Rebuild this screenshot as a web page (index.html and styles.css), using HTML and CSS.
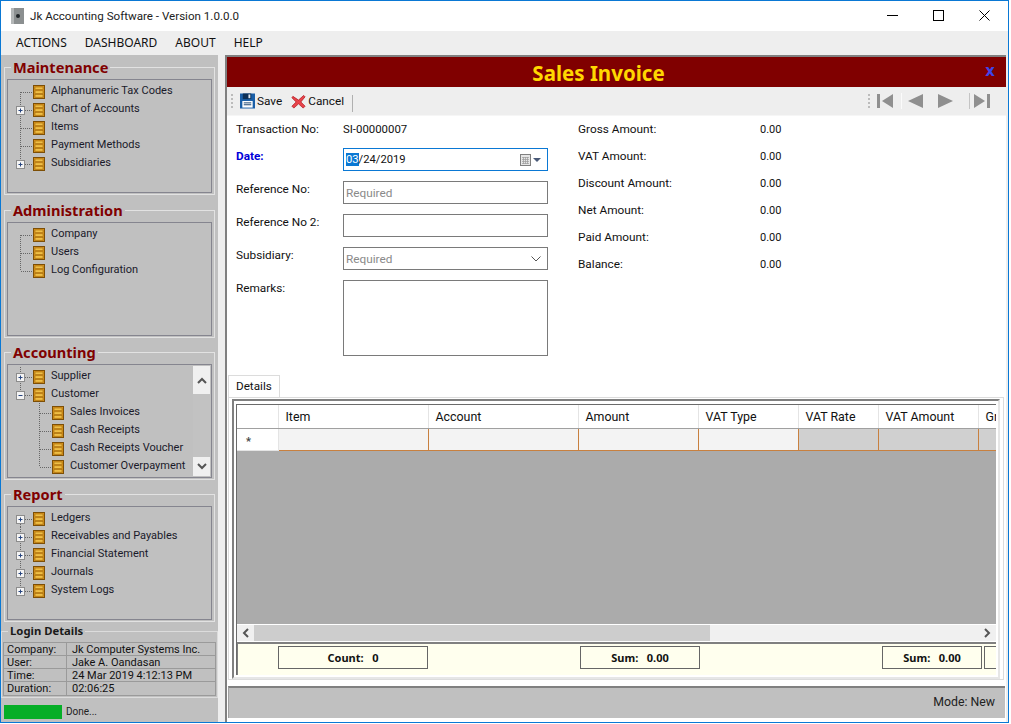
FILE: index.html
```html
<!DOCTYPE html>
<html lang="en">
<head>
<meta charset="utf-8">
<title>Jk Accounting Software</title>
<link rel="stylesheet" href="styles.css">
</head>
<body>
<svg class="defs" width="0" height="0" aria-hidden="true">
  <symbol id="cab" viewBox="0 0 12 14">
    <rect x="0.5" y="0.5" width="11" height="13" fill="#d8931a" stroke="#7d4f06"/>
    <rect x="2" y="2" width="8" height="2.6" fill="#f0bf45" stroke="#a26a0e" stroke-width=".6"/>
    <rect x="2" y="5.8" width="8" height="2.6" fill="#f0bf45" stroke="#a26a0e" stroke-width=".6"/>
    <rect x="2" y="9.6" width="8" height="2.6" fill="#f0bf45" stroke="#a26a0e" stroke-width=".6"/>
  </symbol>
  <g id="plus"><rect x="8.5" y="6.5" width="8" height="8" fill="#f4f4f4" stroke="#8c8c8c"/><path d="M10.5 10.5h4M12.5 8.5v4" stroke="#27457f"/></g>
  <g id="minus"><rect x="8.5" y="6.5" width="8" height="8" fill="#f4f4f4" stroke="#8c8c8c"/><path d="M10.5 10.5h4" stroke="#27457f"/></g>
</svg>
<div class="window">
  <header class="titlebar">
    <svg class="appicon" width="13" height="16" viewBox="0 0 13 16"><rect width="13" height="16" fill="#8b8f90"/><rect x="0" y="0" width="3" height="16" fill="#b4b7b8"/><circle cx="7" cy="8" r="2" fill="#1e2326"/></svg>
    <span class="apptitle">Jk Accounting Software - Version 1.0.0.0</span>
    <div class="winbtns">
      <svg width="11" height="11" viewBox="0 0 11 11"><path d="M0 5.5h11" stroke="#000"/></svg>
      <svg width="11" height="11" viewBox="0 0 11 11"><rect x=".5" y=".5" width="10" height="10" fill="none" stroke="#000"/></svg>
      <svg width="11" height="11" viewBox="0 0 11 11"><path d="M.5.5l10 10M10.5.5l-10 10" stroke="#000"/></svg>
    </div>
  </header>
  <nav class="menubar"><span>ACTIONS</span><span>DASHBOARD</span><span>ABOUT</span><span>HELP</span></nav>
  <div class="main">
    <aside class="sidebar">
      <fieldset class="group first"><legend>Maintenance</legend>
        <div class="panel"><div class="tree">
          <div class="row"><svg class="conn" width="25" height="18"><path d="M12.5 10v8M13 10.5h12" class="dot"/></svg><svg class="cab"><use href="#cab"/></svg><span>Alphanumeric Tax Codes</span></div>
          <div class="row"><svg class="conn" width="25" height="18"><path d="M12.5 0v18M17 10.5h8" class="dot"/><use href="#plus"/></svg><svg class="cab"><use href="#cab"/></svg><span>Chart of Accounts</span></div>
          <div class="row"><svg class="conn" width="25" height="18"><path d="M12.5 0v18M13 10.5h12" class="dot"/></svg><svg class="cab"><use href="#cab"/></svg><span>Items</span></div>
          <div class="row"><svg class="conn" width="25" height="18"><path d="M12.5 0v18M13 10.5h12" class="dot"/></svg><svg class="cab"><use href="#cab"/></svg><span>Payment Methods</span></div>
          <div class="row"><svg class="conn" width="25" height="18"><path d="M12.5 0v7M17 10.5h8" class="dot"/><use href="#plus"/></svg><svg class="cab"><use href="#cab"/></svg><span>Subsidiaries</span></div>
        </div></div>
      </fieldset>
      <fieldset class="group"><legend>Administration</legend>
        <div class="panel"><div class="tree">
          <div class="row"><svg class="conn" width="25" height="18"><path d="M12.5 10v8M13 10.5h12" class="dot"/></svg><svg class="cab"><use href="#cab"/></svg><span>Company</span></div>
          <div class="row"><svg class="conn" width="25" height="18"><path d="M12.5 0v18M13 10.5h12" class="dot"/></svg><svg class="cab"><use href="#cab"/></svg><span>Users</span></div>
          <div class="row"><svg class="conn" width="25" height="18"><path d="M12.5 0v10M13 10.5h12" class="dot"/></svg><svg class="cab"><use href="#cab"/></svg><span>Log Configuration</span></div>
        </div></div>
      </fieldset>
      <fieldset class="group"><legend>Accounting</legend>
        <div class="panel split"><div class="tree">
          <div class="row"><svg class="conn" width="25" height="18"><path d="M12.5 0v18M17 10.5h8" class="dot"/><use href="#plus"/></svg><svg class="cab"><use href="#cab"/></svg><span>Supplier</span></div>
          <div class="row"><svg class="conn" width="25" height="18"><path d="M12.5 0v7M17 10.5h8" class="dot"/><use href="#minus"/></svg><svg class="cab"><use href="#cab"/></svg><span>Customer</span></div>
          <div class="row"><svg class="conn" width="44" height="18"><path d="M31.5 0v18M32 10.5h12" class="dot"/></svg><svg class="cab"><use href="#cab"/></svg><span>Sales Invoices</span></div>
          <div class="row"><svg class="conn" width="44" height="18"><path d="M31.5 0v18M32 10.5h12" class="dot"/></svg><svg class="cab"><use href="#cab"/></svg><span>Cash Receipts</span></div>
          <div class="row"><svg class="conn" width="44" height="18"><path d="M31.5 0v18M32 10.5h12" class="dot"/></svg><svg class="cab"><use href="#cab"/></svg><span>Cash Receipts Voucher</span></div>
          <div class="row"><svg class="conn" width="44" height="18"><path d="M31.5 0v10M32 10.5h12" class="dot"/></svg><svg class="cab"><use href="#cab"/></svg><span>Customer Overpayment</span></div>
        </div>
        <div class="vscroll">
          <div class="vbtn"><svg width="10" height="7" viewBox="0 0 10 7"><path d="M1 6l4-4 4 4" fill="none" stroke="#555" stroke-width="2"/></svg></div>
          <div class="vthumb"></div>
          <div class="vbtn"><svg width="10" height="7" viewBox="0 0 10 7"><path d="M1 1l4 4 4-4" fill="none" stroke="#555" stroke-width="2"/></svg></div>
        </div></div>
      </fieldset>
      <fieldset class="group last"><legend>Report</legend>
        <div class="panel"><div class="tree">
          <div class="row"><svg class="conn" width="25" height="18"><path d="M12.5 7v11M17 10.5h8" class="dot"/><use href="#plus"/></svg><svg class="cab"><use href="#cab"/></svg><span>Ledgers</span></div>
          <div class="row"><svg class="conn" width="25" height="18"><path d="M12.5 0v18M17 10.5h8" class="dot"/><use href="#plus"/></svg><svg class="cab"><use href="#cab"/></svg><span>Receivables and Payables</span></div>
          <div class="row"><svg class="conn" width="25" height="18"><path d="M12.5 0v18M17 10.5h8" class="dot"/><use href="#plus"/></svg><svg class="cab"><use href="#cab"/></svg><span>Financial Statement</span></div>
          <div class="row"><svg class="conn" width="25" height="18"><path d="M12.5 0v18M17 10.5h8" class="dot"/><use href="#plus"/></svg><svg class="cab"><use href="#cab"/></svg><span>Journals</span></div>
          <div class="row"><svg class="conn" width="25" height="18"><path d="M12.5 0v7M17 10.5h8" class="dot"/><use href="#plus"/></svg><svg class="cab"><use href="#cab"/></svg><span>System Logs</span></div>
        </div></div>
      </fieldset>
      <fieldset class="login"><legend>Login Details</legend>
        <div class="ltable">
          <span>Company:</span><span>Jk Computer Systems Inc.</span>
          <span>User:</span><span>Jake A. Oandasan</span>
          <span>Time:</span><span>24 Mar 2019 4:12:13 PM</span>
          <span>Duration:</span><span>02:06:25</span>
        </div>
      </fieldset>
      <div class="progress"><div class="bar"></div><span>Done...</span></div>
    </aside>
    <section class="content">
      <div class="formhead"><h1>Sales Invoice</h1><span class="close">x</span></div>
      <div class="toolbar">
        <span class="grip"></span>
        <svg class="tico" width="15" height="16" viewBox="0 0 16 16"><rect width="16" height="16" fill="#1a5fa8"/><rect x="3" y="0" width="9" height="6" fill="#0c2f57"/><rect x="9" y="1" width="2" height="4" fill="#dfe7f0"/><rect x="2.5" y="8" width="11" height="7" fill="#fff"/><path d="M4 10h8M4 12h8" stroke="#123c6b"/></svg>
        <span class="tlabel">Save</span>
        <svg class="tico second" width="15" height="15" viewBox="0 0 16 16"><path d="M2 2.5L8 6.5l5.5-5L15 3l-4.500 5.500L15 13l-2 2-5-4.500L3 15l-2-2 4.500-4.500L1 4z" fill="#e8434a" stroke="#b01a20" stroke-width=".8"/></svg>
        <span class="tlabel">Cancel</span>
        <span class="sep"></span>
        <span class="spacer"></span>
        <span class="grip"></span>
        <svg class="nav" width="17" height="16" viewBox="0 0 17 16"><rect x="0" y="1" width="3" height="14" fill="#8f8f8f"/><path d="M16 1v14L5 8z" fill="#8f8f8f"/></svg>
        <span class="navsep"></span>
        <svg class="nav" width="15" height="14" viewBox="0 0 15 14"><path d="M15 0v14L0 7z" fill="#8f8f8f"/></svg>
        <svg class="nav gapnav" width="15" height="14" viewBox="0 0 15 14"><path d="M0 0v14L15 7z" fill="#8f8f8f"/></svg>
        <span class="navsep far"></span>
        <svg class="nav" width="17" height="16" viewBox="0 0 17 16"><path d="M1 1v14L12 8z" fill="#8f8f8f"/><rect x="14" y="1" width="3" height="14" fill="#8f8f8f"/></svg>
      </div>
      <div class="form">
        <div class="leftcol">
          <div class="frow plain"><label>Transaction No:</label><span class="val">SI-00000007</span></div>
          <div class="frow"><label class="req">Date:</label>
            <div class="input focus"><span class="dateval"><span class="sel">03</span>/24/2019</span>
              <span class="dateico"><svg width="11" height="12" viewBox="0 0 11 12"><rect x=".5" y=".5" width="10" height="11" fill="#e6e6e6" stroke="#808080"/><path d="M2 3.500h7M2 5.500h7M2 7.500h7M2 9.500h7M3.500 3v7M5.500 3v7M7.500 3v7" stroke="#9b9b9b" stroke-width=".7"/></svg><svg width="8" height="4" viewBox="0 0 8 4"><path d="M0 0h8L4 4z" fill="#4a5a78"/></svg></span>
            </div>
          </div>
          <div class="frow"><label>Reference No:</label><div class="input ph">Required</div></div>
          <div class="frow"><label>Reference No 2:</label><div class="input"></div></div>
          <div class="frow"><label>Subsidiary:</label><div class="input ph">Required<svg class="chev" width="10" height="6" viewBox="0 0 10 6"><path d="M.5.500L5 5 9.500.500" fill="none" stroke="#555"/></svg></div></div>
          <div class="frow"><label>Remarks:</label><div class="input area"></div></div>
        </div>
        <div class="totals">
          <span>Gross Amount:</span><span class="amt">0.00</span>
          <span>VAT Amount:</span><span class="amt">0.00</span>
          <span>Discount Amount:</span><span class="amt">0.00</span>
          <span>Net Amount:</span><span class="amt">0.00</span>
          <span>Paid Amount:</span><span class="amt">0.00</span>
          <span>Balance:</span><span class="amt">0.00</span>
        </div>
      </div>
      <div class="details">
        <div class="tabs"><span class="tab">Details</span></div>
        <div class="tabpage">
          <div class="frame">
            <div class="grid">
              <table class="dg">
                <colgroup><col class="c0"><col class="c1"><col class="c2"><col class="c3"><col class="c4"><col class="c5"><col class="c6"><col class="c7"></colgroup>
                <thead><tr><th></th><th>Item</th><th>Account</th><th>Amount</th><th>VAT Type</th><th>VAT Rate</th><th>VAT Amount</th><th>Gr</th></tr></thead>
                <tbody><tr><td class="rh">*</td><td></td><td></td><td></td><td></td><td class="ro"></td><td class="ro"></td><td class="ro"></td></tr></tbody>
              </table>
              <div class="empty"></div>
              <div class="hscroll">
                <span class="hbtn"><svg width="7" height="10" viewBox="0 0 7 10"><path d="M6 1L2 5l4 4" fill="none" stroke="#555" stroke-width="2"/></svg></span>
                <span class="hthumb"></span>
                <span class="hrest"></span>
                <span class="hbtn"><svg width="7" height="10" viewBox="0 0 7 10"><path d="M1 1l4 4-4 4" fill="none" stroke="#555" stroke-width="2"/></svg></span>
              </div>
              <div class="gfoot">
                <div class="fbox fcount"><b>Count:&nbsp;&nbsp;&nbsp;0</b></div>
                <div class="fbox fsum1"><b>Sum:&nbsp;&nbsp;&nbsp;0.00</b></div>
                <div class="fbox fsum2"><b>Sum:&nbsp;&nbsp;&nbsp;0.00</b></div>
                <div class="fbox flast"></div>
              </div>
            </div>
          </div>
        </div>
      </div>
      <footer class="status">Mode: New</footer>
    </section>
  </div>
</div>
</body>
</html>
```
FILE: styles.css
```css
* { box-sizing: border-box; }
html, body { margin: 0; padding: 0; background: #fff; }
body { width: 1011px; height: 724px; overflow: hidden; font: 11.8px/16px Roboto, "Noto Sans", sans-serif; color: #111; }
.defs { position: absolute; }
.window { width: 1009px; height: 723px; border: 1px solid #0a78d4; display: flex; flex-direction: column; background: #fff; }

.titlebar { height: 30px; flex: none; display: flex; align-items: center; padding-left: 10px; background: #fff; }
.appicon { margin-right: 6px; }
.apptitle { flex: 1; color: #222; font-size: 11.6px; }
.winbtns { display: flex; gap: 35px; padding-right: 18px; margin-top: -1px; }

.menubar { height: 24px; flex: none; background: #eee; display: flex; align-items: center; padding-left: 15px; gap: 18px; color: #111; font: 12px/16px "Noto Sans", sans-serif; }

.main { flex: 1; min-height: 0; display: flex; background: #eee; }

.sidebar { width: 217px; flex: none; background: #c0c0c0; padding-top: 3px; display: flex; flex-direction: column; }
.group { margin: 0 3px 5px; padding: 0 2px 1px; border: 1px solid #e2e2e2; min-width: 0; }
.group.first { margin-bottom: 6px; }
.group.last { margin-bottom: 2px; }
.group legend { margin-left: 4px; padding: 0 2px; font: bold 14.6px/18px "Noto Sans", sans-serif; color: #800000; }
.panel { height: 114px; margin-top: 3px; border: 1px solid #85858f; padding-top: 2px; font-size: 11px; }
.panel.split { display: flex; padding-top: 0; }
.split .tree { flex: 1; min-width: 0; padding-top: 2px; }
.row { height: 18px; display: flex; align-items: center; white-space: nowrap; color: #1a1a2a; }
.row > span { margin-left: 6px; }
.conn { flex: none; display: block; }
.dot { fill: none; stroke: #666; stroke-dasharray: 1 1; }
.cab { width: 12px; height: 14px; flex: none; margin-top: 1px; }

.vscroll { width: 17px; margin: 1px; display: flex; flex-direction: column; background: #f0f0f0; }
.vbtn { height: 28px; display: flex; align-items: center; justify-content: center; }
.vbtn:last-child { height: 18px; }
.vthumb { height: 63px; background: #c2c2c2; }

.login { margin: 0; padding: 0 1px 0; border: 1px solid #dcdcdc; min-width: 0; height: 74px; }
.login legend { margin-left: 5px; padding: 0 2px; font: bold 11.3px/14px "Noto Sans", sans-serif; color: #1a1a1a; }
.ltable { display: grid; grid-template-columns: 63px 1fr; border: 1px solid #9a9a9a; margin-top: 4px; font-size: 11px; }
.ltable span { height: 13px; line-height: 12px; padding: 1px 0 0 3px; border-bottom: 1px solid #9a9a9a; white-space: nowrap; }
.ltable span:nth-child(odd) { border-right: 1px solid #9a9a9a; }
.ltable span:nth-child(even) { padding-left: 5px; }
.ltable span:nth-last-child(-n+2) { border-bottom: 0; }
.progress { display: flex; align-items: center; margin-top: 6px; padding-left: 3px; font-size: 10px; color: #222; }
.bar { width: 58px; height: 14px; background: #06ae27; margin-right: 4px; }

.content { flex: 1; min-width: 0; margin: 0 2px 0 7px; background: #fff; border-left: 2px solid #808080; border-top: 2px solid #808080; display: flex; flex-direction: column; }
.formhead { height: 30px; flex: none; background: #800000; display: flex; align-items: center; }
.formhead h1 { margin: 0; flex: 1; text-align: center; font: bold 20.5px/30px "Noto Sans", sans-serif; color: #ffd700; padding-top: 1px; }
.close { width: 36px; text-align: center; padding: 0 0 2px 4px; color: #3f46e8; font: bold 15px/20px "DejaVu Sans", sans-serif; }

.toolbar { height: 29px; flex: none; background: #eee; display: flex; align-items: center; padding: 0 16px 0 4px; border-bottom: 1px solid #f6f6f6; }
.grip { width: 2px; height: 15px; margin-right: 7px; background: repeating-linear-gradient(#bbb 0 2px, transparent 2px 4px); flex: none; }
.tico { flex: none; }
.tlabel { margin-left: 2px; }
.second { margin-left: 9px; }
.sep { width: 1px; height: 17px; background: #b0b0b0; margin: 4px 0 0 8px; }
.spacer { flex: 1; }
.nav { flex: none; }
.navsep { width: 1px; height: 16px; background: #fbfbfb; margin: 0 6px 0 7px; }
.navsep.far { margin: 0 3px 0 16px; background: #c4c4c4; }
.gapnav { margin-left: 15px; }

.form { height: 259px; flex: none; display: flex; padding: 5px 0 0 9px; }
.leftcol { width: 342px; display: flex; flex-direction: column; gap: 10px; }
.frow { display: flex; }
.frow label { width: 107px; flex: none; }
.frow.plain { height: 17px; }
.req { color: #0000d8; font-weight: bold; }
.val { font-size: 11.4px; }
.input { width: 205px; height: 23px; border: 1px solid #7a7a7a; display: flex; align-items: center; justify-content: space-between; padding: 0 2px; color: #111; }
.input.focus { border-color: #0a78d4; }
.input.ph { color: #8a8a8a; }
.input.area { height: 76px; }
.dateval { font-size: 11.2px; }
.sel { background: #0a78d4; color: #fff; }
.dateico { display: flex; align-items: center; gap: 2px; padding-right: 4px; }
.chev { margin-right: 4px; }
.totals { display: grid; grid-template-columns: 182px auto; grid-auto-rows: 27px; align-content: start; }
.amt { font-size: 11px; line-height: 18px; }

.details { flex: 1; min-height: 0; display: flex; flex-direction: column; padding: 0 2px 6px 1px; }
.tabs { height: 22px; flex: none; display: flex; align-items: flex-end; }
.tab { width: 52px; height: 22px; border: 1px solid #dcdcdc; border-bottom: 0; padding: 2px 0 0 7px; background: #fff; font-size: 11.7px; }
.tabpage { flex: 1; min-height: 0; border: 1px solid #dcdcdc; padding: 1px 3px 0 3px; display: flex; }
.frame { flex: 1; min-width: 0; border-top: 2px solid #808080; border-left: 2px solid #808080; border-bottom: 2px solid #e6e6e6; border-right: 2px solid #e6e6e6; padding: 3px 2px 2px 2px; display: flex; }
.grid { flex: 1; min-width: 0; border-top: 1px solid #6b6b6b; border-left: 1px solid #6b6b6b; display: flex; flex-direction: column; background: #ababab; overflow: hidden; }
.dg { table-layout: fixed; width: 759px; border-collapse: collapse; flex: none; background: #fff; }
.c0 { width: 41px; } .c1, .c2 { width: 150px; } .c3 { width: 120px; } .c4 { width: 100px; } .c5 { width: 80px; } .c6 { width: 100px; } .c7 { width: 18px; }
.dg th { height: 23px; padding: 2px 0 0 7px; font-weight: normal; font-size: 12.4px; text-align: left; border-right: 1px solid #e4e4e4; border-bottom: 1px solid #a0a0a0; white-space: nowrap; overflow: hidden; background: #fff; }
.dg td { height: 22px; padding: 0; background: #f3f3f3; border-right: 1px solid #c8803f; border-bottom: 1px solid #c8803f; }
.dg td.rh { background: #fff; border-color: #e4e4e4; text-align: left; padding: 5px 0 0 9px; font-weight: bold; font-size: 11px; color: #444; }
.dg td.ro { background: #d0d0d0; }
.empty { flex: 1; }
.hscroll { height: 18px; flex: none; display: flex; background: #f0f0f0; border-top: 1px solid #fff; border-bottom: 1px solid #fff; }
.hbtn { width: 17px; flex: none; display: flex; align-items: center; justify-content: center; }
.hthumb { width: 456px; background: #cdcdcd; }
.hrest { flex: 1; }
.gfoot { height: 33px; flex: none; background: #ffffee; border-top: 2px solid #808080; border-left: 1px solid #808080; display: flex; padding: 2px 0 0 40px; overflow: hidden; font-family: "Noto Sans", sans-serif; }
.fbox { height: 23px; flex: none; border: 1px solid #666; display: flex; align-items: center; justify-content: center; font-size: 11px; }
.fcount { width: 150px; }
.fsum1 { width: 120px; margin-left: 152px; }
.fsum2 { width: 100px; margin-left: 182px; }
.flast { width: 40px; margin-left: 2px; }

.status { height: 32px; flex: none; margin: 0 1px 4px 1px; background: #c0c0c0; border-top: 2px solid #808080; border-left: 1px solid #a0a0a0; display: flex; align-items: center; justify-content: flex-end; padding: 0 10px 2px 0; color: #222; font-size: 12.3px; }
```
